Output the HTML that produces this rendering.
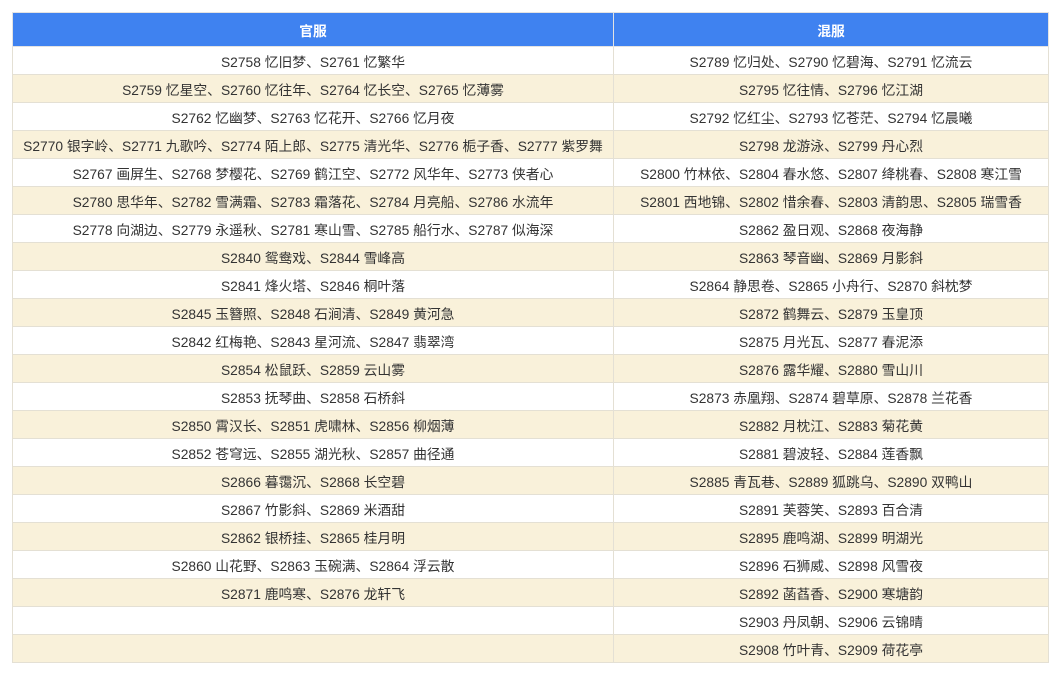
<!DOCTYPE html><html><head><meta charset="utf-8"><style>
body{margin:0;background:#fff;width:1060px;height:674px;overflow:hidden;font-family:"Liberation Sans","Noto Sans CJK SC",sans-serif;}
table{position:absolute;left:12px;top:12px;width:1036px;border-collapse:collapse;table-layout:fixed;}
th{background:#3f82f0;color:#fff;font-size:13.8px;font-weight:bold;height:33px;padding:0;border:1px solid #e3e3e3;}
td{height:27px;padding:0;text-align:center;font-size:13.8px;color:#333;border:1px solid #e4e0d4;white-space:nowrap;}
tr:nth-child(even) td{background:#f9f1da;}
tr:nth-child(odd) td{background:#fff;}
</style></head><body>
<table><colgroup><col style="width:601px"><col style="width:435px"></colgroup>
<thead><tr><th>官服</th><th>混服</th></tr></thead><tbody>
<tr><td>S2758 忆旧梦、S2761 忆繁华</td><td>S2789 忆归处、S2790 忆碧海、S2791 忆流云</td></tr>
<tr><td>S2759 忆星空、S2760 忆往年、S2764 忆长空、S2765 忆薄雾</td><td>S2795 忆往情、S2796 忆江湖</td></tr>
<tr><td>S2762 忆幽梦、S2763 忆花开、S2766 忆月夜</td><td>S2792 忆红尘、S2793 忆苍茫、S2794 忆晨曦</td></tr>
<tr><td>S2770 银字岭、S2771 九歌吟、S2774 陌上郎、S2775 清光华、S2776 栀子香、S2777 紫罗舞</td><td>S2798 龙游泳、S2799 丹心烈</td></tr>
<tr><td>S2767 画屏生、S2768 梦樱花、S2769 鹤江空、S2772 风华年、S2773 侠者心</td><td>S2800 竹林依、S2804 春水悠、S2807 绛桃春、S2808 寒江雪</td></tr>
<tr><td>S2780 思华年、S2782 雪满霜、S2783 霜落花、S2784 月亮船、S2786 水流年</td><td>S2801 西地锦、S2802 惜余春、S2803 清韵思、S2805 瑞雪香</td></tr>
<tr><td>S2778 向湖边、S2779 永遥秋、S2781 寒山雪、S2785 船行水、S2787 似海深</td><td>S2862 盈日观、S2868 夜海静</td></tr>
<tr><td>S2840 鸳鸯戏、S2844 雪峰高</td><td>S2863 琴音幽、S2869 月影斜</td></tr>
<tr><td>S2841 烽火塔、S2846 桐叶落</td><td>S2864 静思卷、S2865 小舟行、S2870 斜枕梦</td></tr>
<tr><td>S2845 玉簪照、S2848 石涧清、S2849 黄河急</td><td>S2872 鹤舞云、S2879 玉皇顶</td></tr>
<tr><td>S2842 红梅艳、S2843 星河流、S2847 翡翠湾</td><td>S2875 月光瓦、S2877 春泥添</td></tr>
<tr><td>S2854 松鼠跃、S2859 云山雾</td><td>S2876 露华耀、S2880 雪山川</td></tr>
<tr><td>S2853 抚琴曲、S2858 石桥斜</td><td>S2873 赤凰翔、S2874 碧草原、S2878 兰花香</td></tr>
<tr><td>S2850 霄汉长、S2851 虎啸林、S2856 柳烟薄</td><td>S2882 月枕江、S2883 菊花黄</td></tr>
<tr><td>S2852 苍穹远、S2855 湖光秋、S2857 曲径通</td><td>S2881 碧波轻、S2884 莲香飘</td></tr>
<tr><td>S2866 暮霭沉、S2868 长空碧</td><td>S2885 青瓦巷、S2889 狐跳乌、S2890 双鸭山</td></tr>
<tr><td>S2867 竹影斜、S2869 米酒甜</td><td>S2891 芙蓉笑、S2893 百合清</td></tr>
<tr><td>S2862 银桥挂、S2865 桂月明</td><td>S2895 鹿鸣湖、S2899 明湖光</td></tr>
<tr><td>S2860 山花野、S2863 玉碗满、S2864 浮云散</td><td>S2896 石狮威、S2898 风雪夜</td></tr>
<tr><td>S2871 鹿鸣寒、S2876 龙轩飞</td><td>S2892 菡萏香、S2900 寒塘韵</td></tr>
<tr><td></td><td>S2903 丹凤朝、S2906 云锦晴</td></tr>
<tr><td></td><td>S2908 竹叶青、S2909 荷花亭</td></tr>
</tbody></table></body></html>
